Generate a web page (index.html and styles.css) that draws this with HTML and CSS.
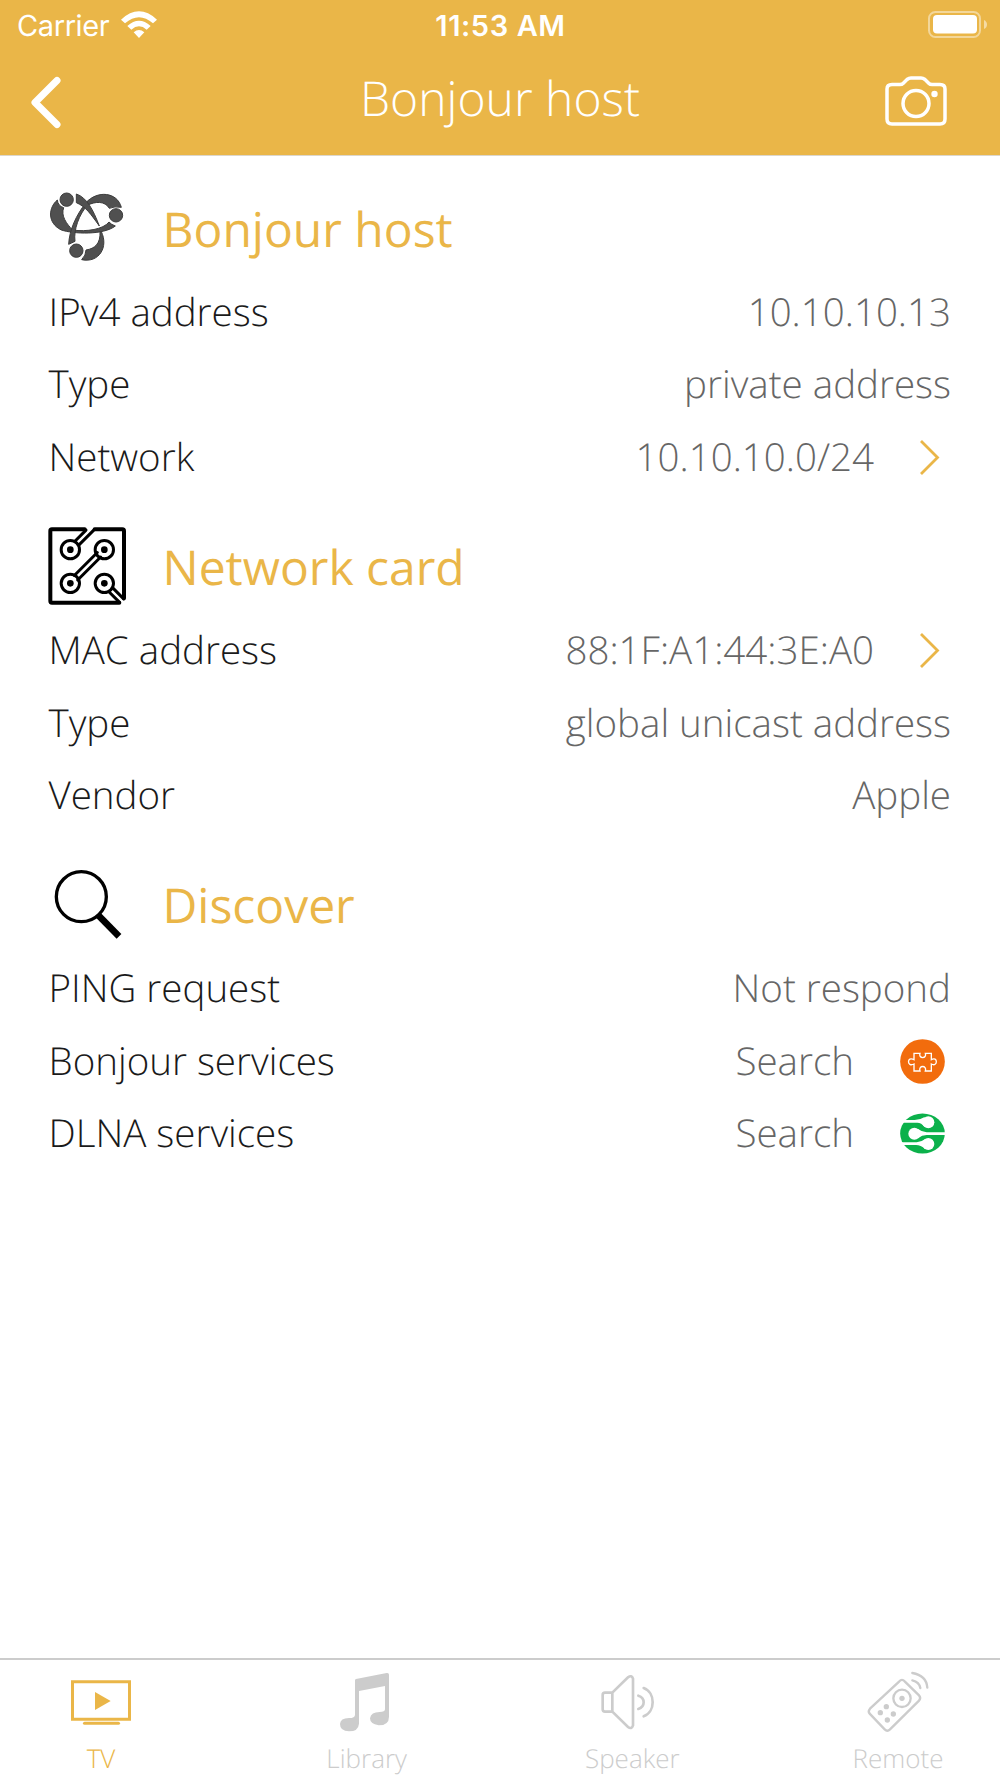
FILE: index.html
```html
<!DOCTYPE html>
<html lang="en">
<head>
<meta charset="utf-8">
<title>Bonjour host</title>
<link rel="stylesheet" href="styles.css">
</head>
<body>
<div class="app">
  <header class="top">
    <div class="status">
      <div class="carrier"><span>Carrier</span>
        <svg class="wifi" viewBox="0 0 108 81"><path d="M0 26Q54-24 108 26L96 37Q54 0 12 37ZM19 45Q54 14 89 45L77 56Q54 36 31 56ZM38 64Q54 50 70 64L54 81Z"/></svg>
      </div>
      <div class="time">11:53 AM</div>
      <svg class="battery" viewBox="0 0 59 27"><rect class="shell" x="1" y="1" width="51" height="25" rx="6.5"/><rect x="5" y="4" width="44" height="18.500" rx="4"/><path class="cap" d="M56 9Q59 10.500 59 13.500T56 18Z"/></svg>
    </div>
    <div class="nav">
      <svg class="back" viewBox="0 0 30 51"><path d="M26 3.500 4 25.500 26 47.500"/></svg>
      <h1>Bonjour host</h1>
      <svg class="camera" viewBox="0 0 62 50"><path d="M7 8.500H15Q17 8.500 18 7.500L22 3.500Q24 2 26 2H36Q38 2 40 3.500L44 7.500Q45 8.500 47 8.500H55Q60 8.500 60 13V43Q60 48 55 48H7Q2 48 2 43V13Q2 8.500 7 8.500Z"/><circle cx="31" cy="27.500" r="13"/><circle class="dot" cx="49.500" cy="18" r="3.200"/></svg>
    </div>
  </header>

  <main>
    <section>
      <div class="head">
        <svg viewBox="24 24 234 234"><g class="bonjour"><circle cx="80" cy="59" r="20"/><circle cx="228" cy="106" r="20"/><circle cx="109" cy="212" r="20"/><path d="M52 60C26 82 20 128 64 150C100 162 190 166 226 138Q214 134 207 126C190 148 140 156 98 150C80 132 62 108 71 83Q54 78 52 60Z"/><path d="M244 82C232 36 172 30 138 68C108 106 88 150 86 193L105 184C100 150 118 102 142 76C165 64 195 62 208 85Q224 78 244 82Z"/><path d="M109 42C140 52 160 90 178 138C152 102 138 80 109 68Z"/><path d="M184 155C206 200 178 250 125 239Q138 226 138 210C165 206 182 190 180 155Z"/></g></svg>
        <h2>Bonjour host</h2>
      </div>
      <div class="row"><span>IPv4 address</span><b>10.10.10.13</b></div>
      <div class="row"><span>Type</span><b>private address</b></div>
      <div class="row"><span>Network</span><b>10.10.10.0/24</b><svg class="chev" viewBox="0 0 19 35"><path d="M1 1 17.500 17.500 1 34"/></svg></div>
    </section>
    <section>
      <div class="head">
        <svg viewBox="54 48 234 234"><g class="card"><path class="frame" d="M164 55H66Q61 55 61 60V270Q61 275 66 275H268M194 55H277Q282 55 282 60V262"/><path d="M134 91.500 168 57.500M147 101.500 192 56.500M202 124.500 133 193.500M212 138 143 207M249 231.500 281 263.500M236 241.500 268 273.500"/><circle cx="121" cy="116" r="27.500"/><circle cx="223" cy="116" r="27.500"/><circle cx="121" cy="217" r="27.500"/><circle cx="223" cy="217" r="27.500"/><g class="pad"><circle cx="121" cy="116" r="10"/><circle cx="223" cy="116" r="10"/><circle cx="121" cy="217" r="10"/><circle cx="223" cy="217" r="10"/></g></g></svg>
        <h2>Network card</h2>
      </div>
      <div class="row"><span>MAC address</span><b>88:1F:A1:44:3E:A0</b><svg class="chev" viewBox="0 0 19 35"><path d="M1 1 17.500 17.500 1 34"/></svg></div>
      <div class="row"><span>Type</span><b>global unicast address</b></div>
      <div class="row"><span>Vendor</span><b>Apple</b></div>
    </section>
    <section>
      <div class="head">
        <svg viewBox="54 42 234 234"><g class="lens"><circle cx="154" cy="137" r="75"/><path d="M203 191 267 256"/></g></svg>
        <h2>Discover</h2>
      </div>
      <div class="row"><span>PING request</span><b>Not respond</b></div>
      <div class="row"><span>Bonjour services</span><b>Search</b><svg class="badge" viewBox="0 0 135 135"><circle cx="67.500" cy="67.500" r="67" fill="#f26c0d"/><path class="puzzle" d="M42 43H60C54 60 82 60 76 43H94V62C114 50 114 86 94 75V96H76C82 78 54 78 60 96H42V75C20 86 20 50 42 62Z"/></svg></div>
      <div class="row"><span>DLNA services</span><b>Search</b><svg class="badge" viewBox="0 0 135 135"><ellipse cx="67.500" cy="67.500" rx="67" ry="60" fill="#0bb14b"/><g class="dlna"><circle cx="85" cy="34" r="18"/><circle cx="43" cy="68" r="18"/><circle cx="85" cy="99" r="18"/><path d="M0 27H44Q60 27 74 18V48Q64 35 52 35H0ZM135 64H80Q68 64 54 54V82Q66 72 80 72H135ZM0 94H50Q62 94 76 84V114Q62 102 48 102H0Z"/></g></svg></div>
    </section>
  </main>

  <nav class="tabs">
    <a class="on"><svg viewBox="0 0 180 180"><path class="line" stroke-width="9" d="M4.500 29.500H175.500V141.500H4.500Z"/><path d="M72 60 119 87 72 114Z"/><rect x="36" y="149" width="111" height="9.500" rx="4.700"/></svg>TV</a>
    <a><svg viewBox="0 0 180 180"><path d="M54 25Q54 22 57 21L149 3Q156 2 156 8V134Q156 160 125 160Q99 156 99 139Q102 120 128 120Q144 120 144 112V42L66 57V155Q64 178 36 178Q9 178 9 156Q10 138 36 138Q54 138 54 128Z"/></svg>Library</a>
    <a><svg viewBox="15 0 180 180"><g class="line" stroke-width="8"><path d="M46 62H24Q17 62 17 69V112Q17 119 24 119H46ZM46 62 93 16Q104 8 108 20V160Q104 173 93 165L46 119"/><path d="M124 71Q140 76 140 91T124 111M140 48C176 61 176 120 140 133"/></g></svg>Speaker</a>
    <a><svg viewBox="3 0 180 180"><g class="line" stroke-width="7"><path d="M97 28Q105 19 113 28L156 70Q163 78 156 86L69 172Q61 180 53 172L8 125Q2 118 9 110Z"/><circle cx="105" cy="79" r="26"/><path d="M136 3Q178 10 181 47M136 25Q157 30 160 48"/></g><circle cx="105" cy="79" r="8"/><circle cx="58" cy="104" r="8"/><circle cx="40" cy="122" r="8"/><circle cx="79" cy="126" r="8"/><circle cx="61" cy="144" r="8"/></svg>Remote</a>
  </nav>
</div>
</body>
</html>
```
FILE: styles.css
```css
* { box-sizing: border-box; }
body { margin: 0; background: #fff; font-family: "Open Sans", sans-serif; font-weight: 300; text-rendering: geometricPrecision; }
svg { display: block; flex: none; overflow: visible; }
h1, h2 { margin: 0; }
.app { width: 1000px; height: 1778px; display: flex; flex-direction: column; }

.top { height: 156px; background: #eab648; border-bottom: 1px solid #dcd6cb; color: #fff; flex: none; }
.status { height: 51px; display: grid; grid-template-columns: 1fr auto 1fr; align-items: center; padding: 1px 13px 2px; font-family: Inter, sans-serif; font-size: 29px; }
.carrier { display: flex; align-items: center; gap: 12px; padding-left: 4px; font-weight: 400; letter-spacing: -.4px; }
.wifi { width: 36px; height: 27px; margin-top: -2px; fill: #fff; }
.time { font-weight: 600; letter-spacing: .6px; padding-left: 1px; }
.battery { width: 59px; height: 27px; margin-top: -1px; justify-self: end; fill: #fff; }
.battery .shell { fill: none; stroke: #fff; stroke-width: 2; opacity: .45; }
.battery .cap { opacity: .5; }
.nav { height: 104px; display: grid; grid-template-columns: 1fr auto 1fr; align-items: center; padding: 0 31px 4px; }
.back { width: 30px; height: 51px; margin-top: 2px; }
.back path { fill: none; stroke: #fff; stroke-width: 7; stroke-linecap: round; stroke-linejoin: round; }
.nav h1 { font-size: 48px; line-height: 60px; font-weight: 300; margin-top: -5px; }
.camera { width: 62px; height: 50px; justify-self: end; margin: -1px 22px 0 0; fill: none; stroke: #fff; stroke-width: 3.500; }
.camera .dot { fill: #fff; stroke: none; }

main { flex: 1; padding: 0 49px 0 48px; margin-top: -2px; }
section { height: 338.200px; }
.head { height: 121.900px; padding-top: 26px; display: flex; align-items: center; gap: 36.500px; }
.head svg { width: 78px; height: 78px; margin-top: -1px; }
.head h2 { font-size: 48px; line-height: 60px; font-weight: 400; color: #eab648; padding-top: 4px; }
.row { height: 72.500px; line-height: 72.500px; display: flex; align-items: center; font-size: 38.500px; color: #1a1a1a; padding-left: .5px; }
.row b { margin-left: auto; font-weight: 300; color: #666; }
.chev { width: 19px; height: 35px; margin: 0 12px 0 46px; fill: none; stroke: #eab648; stroke-width: 2.800; }
.badge { width: 45px; height: 45px; margin: 0 6px 0 46px; }
.bonjour { fill: #505050; stroke: #3c3c3c; stroke-width: 3; }
.card { fill: none; stroke: #000; stroke-width: 9; stroke-linecap: round; }
.card .frame { stroke-width: 12; }
.card .pad { fill: #000; stroke: none; }
.lens { fill: none; stroke: #000; stroke-width: 10; }
.lens path { stroke-width: 20; }
.puzzle { fill: none; stroke: #fff; stroke-width: 4; }
.dlna { fill: #fff; }

.tabs { height: 120px; border-top: 2px solid #ccc; display: flex; justify-content: space-between; flex: none; padding: 0 2px 0 1px; }
.tabs a { width: 200px; display: flex; flex-direction: column; align-items: center; color: #ccc; fill: #ccc; stroke: none; font-size: 26px; line-height: 34px; padding-top: 12px; gap: 9px; }
.tabs svg { width: 60px; height: 60px; }
.tabs .on { color: #eab648; fill: #eab648; }
.tabs .line { fill: none; stroke: currentColor; stroke-linecap: round; }
```
